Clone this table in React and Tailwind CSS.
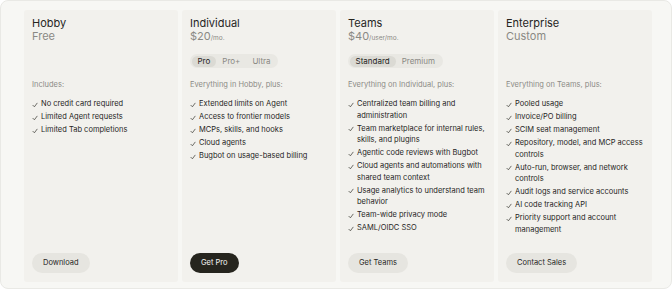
import React from "react";

const plans = [
  {
    name: "Hobby",
    price: "Free",
    intro: "Includes:",
    features: ["No credit card required", "Limited Agent requests", "Limited Tab completions"],
    cta: "Download",
  },
  {
    name: "Individual",
    price: "$20",
    unit: "/mo.",
    tabs: ["Pro", "Pro+", "Ultra"],
    intro: "Everything in Hobby, plus:",
    features: [
      "Extended limits on Agent",
      "Access to frontier models",
      "MCPs, skills, and hooks",
      "Cloud agents",
      "Bugbot on usage-based billing",
    ],
    cta: "Get Pro",
    dark: true,
  },
  {
    name: "Teams",
    price: "$40",
    unit: "/user/mo.",
    tabs: ["Standard", "Premium"],
    intro: "Everything on Individual, plus:",
    features: [
      "Centralized team billing and administration",
      "Team marketplace for internal rules, skills, and plugins",
      "Agentic code reviews with Bugbot",
      "Cloud agents and automations with shared team context",
      "Usage analytics to understand team behavior",
      "Team-wide privacy mode",
      "SAML/OIDC SSO",
    ],
    cta: "Get Teams",
  },
  {
    name: "Enterprise",
    price: "Custom",
    intro: "Everything on Teams, plus:",
    features: [
      "Pooled usage",
      "Invoice/PO billing",
      "SCIM seat management",
      "Repository, model, and MCP access controls",
      "Auto-run, browser, and network controls",
      "Audit logs and service accounts",
      "AI code tracking API",
      "Priority support and account management",
    ],
    cta: "Contact Sales",
  },
];

const Check = () => (
  <svg width="6" height="6" viewBox="0 0 10 10" className="mt-[3.5px] shrink-0">
    <path d="M1.5 5.5 L4 8 L8.5 2" fill="none" stroke="#3a3933" strokeWidth="1.2" strokeLinecap="round" strokeLinejoin="round" />
  </svg>
);

const PlanCard = ({ plan }) => (
  <div className="flex w-[154px] flex-col rounded-[3px] bg-[#f2f1ed] px-[8px] pt-[7px] pb-[9px]">
    <div className="text-[11px] leading-[13px] text-[#26251e]">{plan.name}</div>
    <div className="flex h-[13px] items-baseline text-[11px] leading-[13px] text-[#8a8984]">
      <span>{plan.price}</span>
      {plan.unit && <span className="text-[6.5px]">{plan.unit}</span>}
    </div>

    <div className="mt-[11px] flex h-[14px]">
      {plan.tabs && (
        <div className="flex h-[14px] items-center rounded-full bg-[#e9e8e3] p-[1.5px]">
          {plan.tabs.map((t, i) => (
            <span
              key={t}
              className={`flex h-[11px] items-center rounded-full px-[6px] text-[8px] ${
                i === 0 ? "bg-[#dbdad4] text-[#26251e]" : "text-[#8a8984]"
              }`}
            >
              {t}
            </span>
          ))}
        </div>
      )}
    </div>

    <div className="mt-[11px] text-[7.5px] leading-[12px] text-[#8c8b86]">{plan.intro}</div>

    <ul className="mt-[7px] flex flex-col gap-[1.5px]">
      {plan.features.map((f) => (
        <li key={f} className="flex gap-[3px] text-[7.5px] leading-[11.5px] text-[#26251e]">
          <Check />
          <span>{f}</span>
        </li>
      ))}
    </ul>

    <div className="mt-auto flex">
      <button
        className={`h-[20px] rounded-full px-[11px] text-[7.5px] ${
          plan.dark ? "bg-[#26251e] text-[#f7f7f4]" : "bg-[#e6e5e0] text-[#26251e]"
        }`}
      >
        {plan.cta}
      </button>
    </div>
  </div>
);

export default function App() {
  return (
    <div
      className="h-[291px] w-[672px] bg-white"
      style={{ fontFamily: "Inter, 'Noto Sans', sans-serif" }}
    >
      <div className="flex h-[289px] gap-[4px] rounded-[8px] border border-[#e9e9e5] bg-[#f7f7f4] pt-[9px] pb-[6px] pl-[23px] pr-[19px]">
        {plans.map((p) => (
          <PlanCard key={p.name} plan={p} />
        ))}
      </div>
    </div>
  );
}
